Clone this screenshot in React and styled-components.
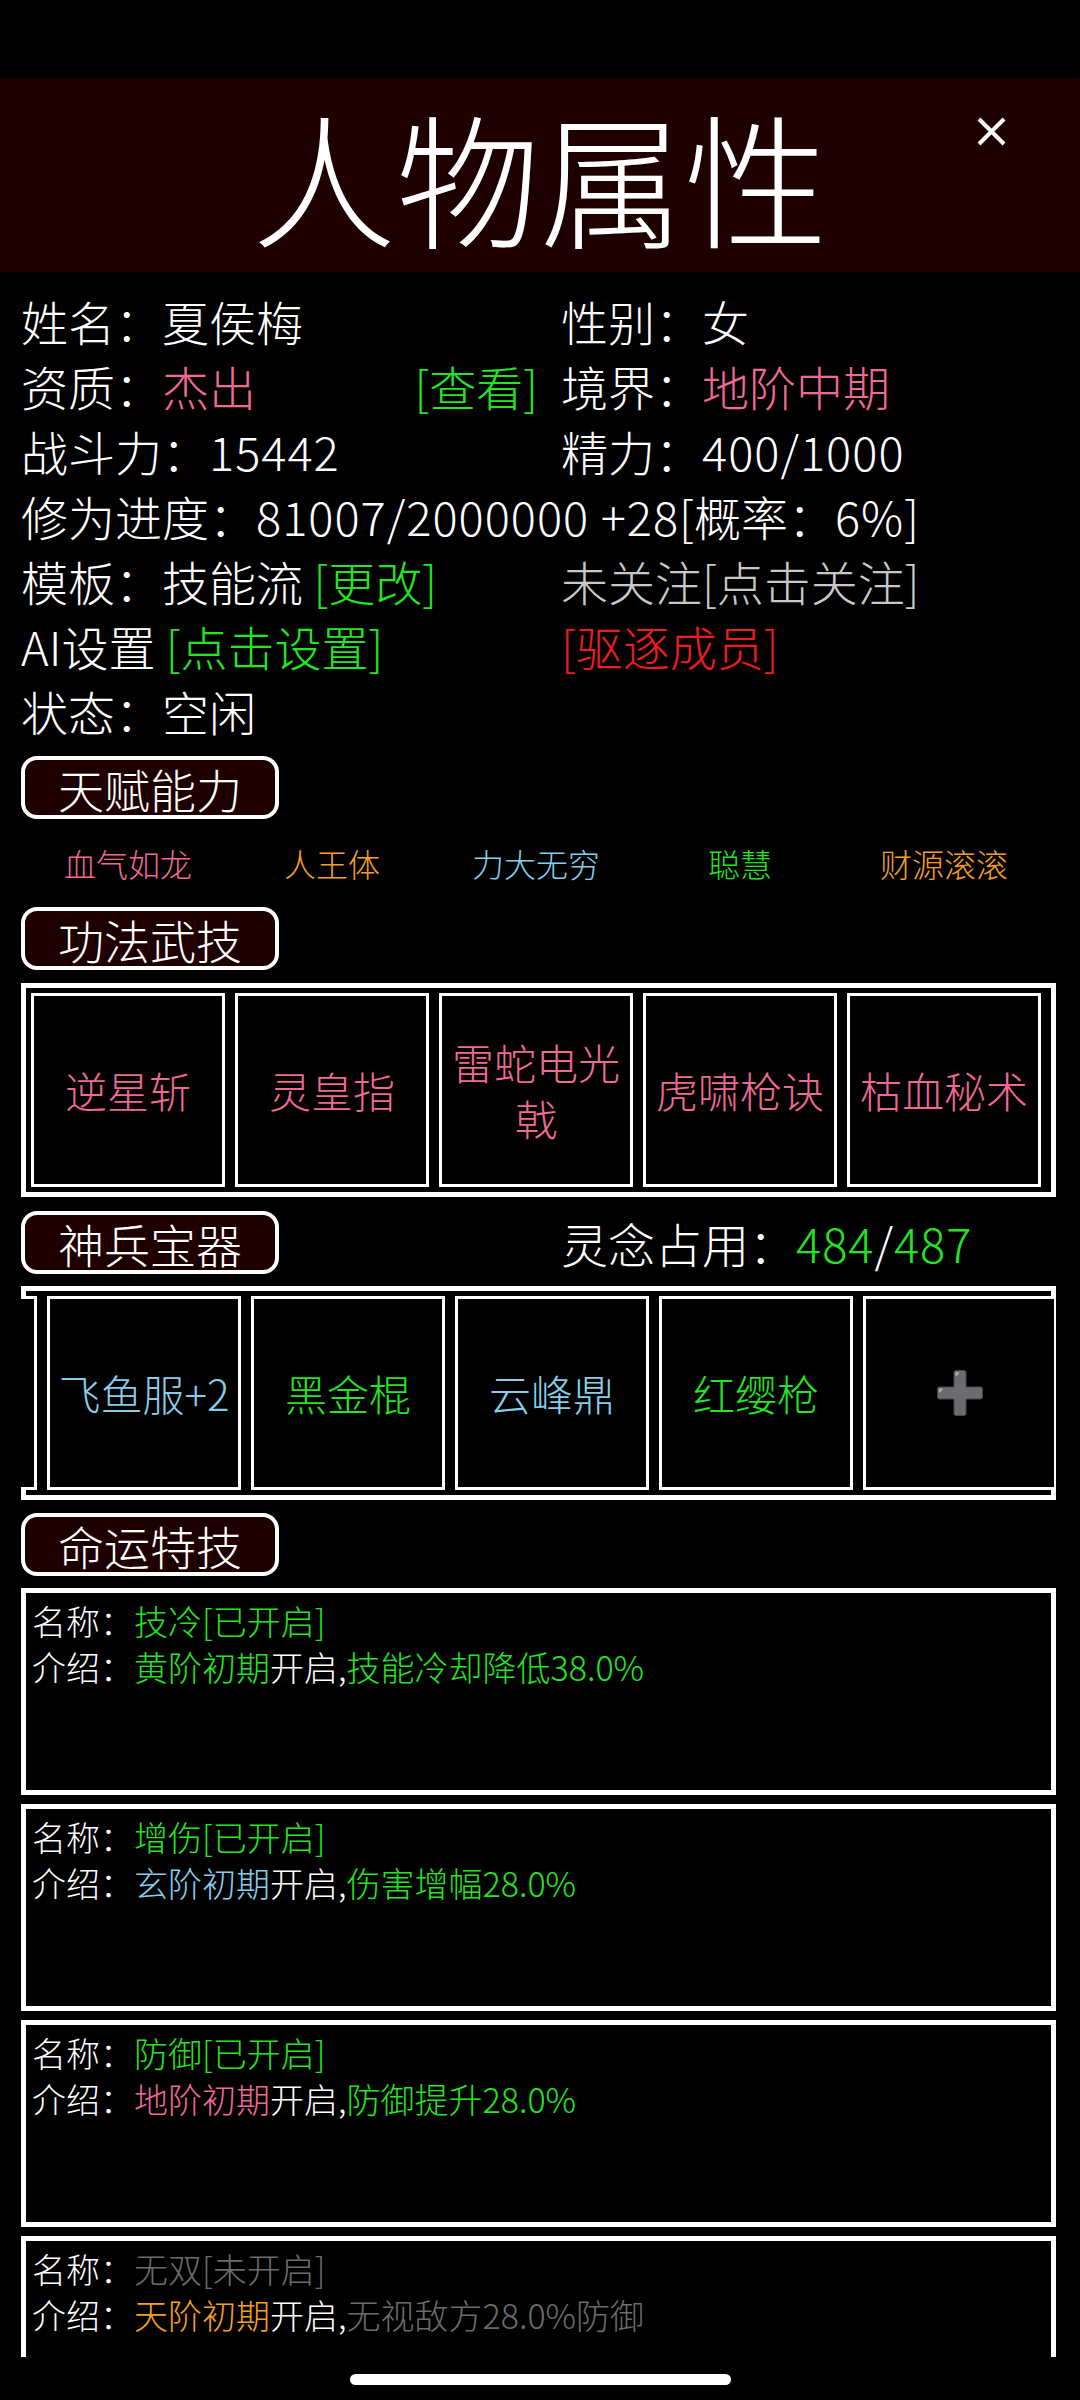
import React from "react"
import styled, { createGlobalStyle } from "styled-components"

const colors = {
    white: "#ffffff",
    pink: "#f06a94",
    green: "#22e622",
    orange: "#f5a020",
    sky: "#87ceeb",
    gray: "#c8c8c8",
    dim: "#6c6c6c",
    red: "#ee1c1c",
}

const talents = [
    { name: "血气如龙", tone: "pink" },
    { name: "人王体", tone: "orange" },
    { name: "力大无穷", tone: "sky" },
    { name: "聪慧", tone: "green" },
    { name: "财源滚滚", tone: "orange" },
]

const skills = ["逆星斩", "灵皇指", "雷蛇电光戟", "虎啸枪诀", "枯血秘术"]

// first slot is scrolled out of view, only its right edge shows
const treasures = [
    { name: "", tone: "sky" },
    { name: "飞鱼服+2", tone: "sky" },
    { name: "黑金棍", tone: "green" },
    { name: "云峰鼎", tone: "sky" },
    { name: "红缨枪", tone: "green" },
    { name: "", add: true },
]

const fates = [
    { name: "技冷[已开启]", nameTone: "green", stage: "黄阶初期", stageTone: "green", effect: "技能冷却降低38.0%", effectTone: "green" },
    { name: "增伤[已开启]", nameTone: "green", stage: "玄阶初期", stageTone: "sky", effect: "伤害增幅28.0%", effectTone: "green" },
    { name: "防御[已开启]", nameTone: "green", stage: "地阶初期", stageTone: "pink", effect: "防御提升28.0%", effectTone: "green" },
    { name: "无双[未开启]", nameTone: "dim", stage: "天阶初期", stageTone: "orange", effect: "无视敌方28.0%防御", effectTone: "dim" },
]

function App() {
    return (
        <Page>
            <GlobalStyle />
            <StatusBar />
            <TitleBar>
                <Title>人物属性</Title>
                <CloseButton aria-label="关闭">
                    <svg width="29" height="29" viewBox="0 0 29 29">
                        <path d="M2 2L27 27M27 2L2 27" stroke="#fff" strokeWidth="4" />
                    </svg>
                </CloseButton>
            </TitleBar>

            <Content>
                <InfoGrid>
                    <InfoCell>姓名：夏侯梅</InfoCell>
                    <InfoCell>性别：女</InfoCell>
                    <InfoCell $spread>
                        <span>资质：<Tone $c="pink">杰出</Tone></span>
                        <Tone $c="green">[查看]</Tone>
                    </InfoCell>
                    <InfoCell>境界：<Tone $c="pink">地阶中期</Tone></InfoCell>
                    <InfoCell>战斗力：<Num>15442</Num></InfoCell>
                    <InfoCell>精力：<Num>400/1000</Num></InfoCell>
                    <InfoCell $full>修为进度：<Num>81007/2000000 +28</Num>[概率：<Num>6%</Num>]</InfoCell>
                    <InfoCell>模板：技能流&nbsp;<Tone $c="green">[更改]</Tone></InfoCell>
                    <InfoCell><Tone $c="gray">未关注[点击关注]</Tone></InfoCell>
                    <InfoCell>AI设置&nbsp;<Tone $c="green">[点击设置]</Tone></InfoCell>
                    <InfoCell><Tone $c="red">[驱逐成员]</Tone></InfoCell>
                    <InfoCell>状态：空闲</InfoCell>
                </InfoGrid>

                <Pill $top={13}>天赋能力</Pill>
                <TalentRow>
                    {talents.map(t => (
                        <Talent key={t.name} $c={t.tone}>{t.name}</Talent>
                    ))}
                </TalentRow>

                <Pill>功法武技</Pill>
                <SkillBox>
                    {skills.map(s => (
                        <Cell key={s} $c="pink">{s}</Cell>
                    ))}
                </SkillBox>

                <HeaderRow>
                    <Pill>神兵宝器</Pill>
                    <span>
                        灵念占用：<Tone $c="green"><Num>484</Num></Tone><Num>/</Num><Tone $c="green"><Num>487</Num></Tone>
                    </span>
                </HeaderRow>
                <TreasureBox>
                    <TreasureTrack $scroll={188}>
                        {treasures.map((t, i) => (
                            <Cell key={i} $c={t.tone}>
                                {t.add ? <PlusIcon /> : t.name}
                            </Cell>
                        ))}
                    </TreasureTrack>
                </TreasureBox>

                <Pill $top={13}>命运特技</Pill>
                <FateList>
                    {fates.map(f => (
                        <FateCard key={f.name}>
                            <FateLine>名称：<Tone $c={f.nameTone}>{f.name}</Tone></FateLine>
                            <FateLine>
                                介绍：<Tone $c={f.stageTone}>{f.stage}</Tone>开启,<Tone $c={f.effectTone}>{f.effect}</Tone>
                            </FateLine>
                        </FateCard>
                    ))}
                </FateList>
            </Content>

            <NavBar>
                <HomeBar />
            </NavBar>
        </Page>
    )
}

function PlusIcon() {
    return (
        <svg width="46" height="46" viewBox="0 0 46 46">
            <path
                d="M19 0.5H27Q29 0.5 29 2.5V17H43.5Q45.5 17 45.5 19V27Q45.5 29 43.5 29H29V43.5Q29 45.5 27 45.5H19Q17 45.5 17 43.5V29H2.5Q0.5 29 0.5 27V19Q0.5 17 2.5 17H17V2.5Q17 0.5 19 0.5Z"
                fill="#6c6c70"
                stroke="#48484b"
                strokeWidth="1"
            />
            <path d="M18.5 2.2H22.5L19.4 6.2H18.5Z" fill="#b0b0b4" />
            <path d="M2.2 18.5H6.2L3.1 22.5H2.2Z" fill="#b0b0b4" />
        </svg>
    )
}

const GlobalStyle = createGlobalStyle`
    html, body {
        margin: 0;
        padding: 0;
        background: #000;
    }
    body {
        font-family: "Noto Sans CJK SC", "Noto Sans", sans-serif;
        font-weight: 300;
    }
`

const Page = styled.div`
    width: 1080px;
    height: 2400px;
    display: flex;
    flex-direction: column;
    background: #000;
    color: #fff;
    overflow: hidden;
`

const StatusBar = styled.div`
    height: 78px;
    flex-shrink: 0;
`

const TitleBar = styled.div`
    height: 194px;
    flex-shrink: 0;
    background: #1f0000;
    display: grid;
    grid-template-columns: 1fr auto 1fr;
    align-items: center;
`

const Title = styled.h1`
    grid-column: 2;
    margin: 0;
    font-size: 144px;
    font-weight: 300;
    line-height: 1;
`

const CloseButton = styled.button`
    justify-self: end;
    align-self: start;
    margin: 39px 74px 0 0;
    padding: 0;
    width: 29px;
    height: 29px;
    border: 0;
    background: none;
    display: flex;
`

const Content = styled.div`
    flex: 1;
    min-height: 0;
    overflow: hidden;
    padding: 0 24px 0 21px;
`

const InfoGrid = styled.div`
    display: grid;
    grid-template-columns: 517px 1fr;
    column-gap: 23px;
    padding-top: 16px;
    font-size: 47px;
    line-height: 65px;
`

const InfoCell = styled.div`
    display: flex;
    justify-content: ${p => (p.$spread ? "space-between" : "flex-start")};
    grid-column: ${p => (p.$full ? "1 / -1" : "auto")};
    white-space: pre;
`

// digits in the reference run a little wider than Noto's
const Num = styled.span`
    letter-spacing: 1px;
`

const Tone = styled.span`
    color: ${p => colors[p.$c]};
`

const Pill = styled.div`
    width: 258px;
    height: 63px;
    box-sizing: border-box;
    margin-top: ${p => p.$top || 0}px;
    border: 4px solid #fff;
    border-radius: 16px;
    background: #1f0000;
    display: flex;
    align-items: center;
    justify-content: center;
    font-size: 46px;
    line-height: 1;
`

const TalentRow = styled.div`
    height: 88px;
    display: flex;
    align-items: center;
    padding-left: 5px;
    font-size: 32px;
`

const Talent = styled.div`
    width: 204px;
    text-align: center;
    color: ${p => colors[p.$c]};
`

const SkillBox = styled.div`
    margin-top: 13px;
    border: 5px solid #fff;
    display: flex;
`

const Cell = styled.div`
    flex-shrink: 0;
    width: 194px;
    height: 194px;
    margin: 5px;
    box-sizing: border-box;
    border: 3px solid #fff;
    background: #000;
    display: flex;
    align-items: center;
    justify-content: center;
    text-align: center;
    font-size: 42px;
    line-height: 56px;
    color: ${p => colors[p.$c] || "#fff"};
`

const HeaderRow = styled.div`
    margin-top: 14px;
    display: grid;
    grid-template-columns: 517px 1fr;
    column-gap: 23px;
    align-items: center;
    font-size: 47px;
    line-height: 58px;
`

const TreasureBox = styled.div`
    margin-top: 12px;
    padding: 5px;
    box-shadow: inset 0 0 0 5px #fff;
    overflow: hidden;
`

const TreasureTrack = styled.div`
    display: flex;
    margin-left: ${p => -p.$scroll}px;
`

const FateList = styled.div`
    margin-top: 12px;
    display: flex;
    flex-direction: column;
    gap: 9px;
`

const FateCard = styled.div`
    flex-shrink: 0;
    height: 207px;
    box-sizing: border-box;
    border: 5px solid #fff;
    padding: 5px 6px;
    font-size: 34px;
    line-height: 46px;
`

const FateLine = styled.div`
    white-space: nowrap;
`

const NavBar = styled.div`
    height: 43px;
    flex-shrink: 0;
    display: flex;
    justify-content: center;
    padding-top: 17px;
    box-sizing: border-box;
`

const HomeBar = styled.div`
    width: 381px;
    height: 11px;
    border-radius: 6px;
    background: #fff;
`

export default App
